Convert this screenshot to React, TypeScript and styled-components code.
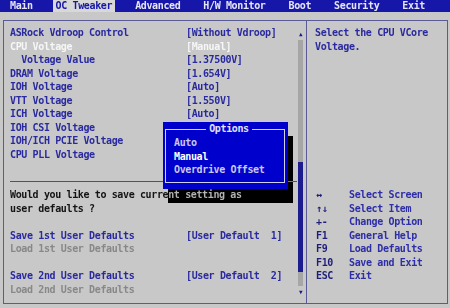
import React from 'react';
import styled, { createGlobalStyle } from 'styled-components';

const GlobalStyle = createGlobalStyle`
  html, body {
    margin: 0;
    padding: 0;
    background: #c8c8c8;
  }
`;

const ROW = 13.5;

const Screen = styled.div`
  width: 450px;
  height: 308px;
  overflow: hidden;
  background: #c8c8c8;
  font-family: 'DejaVu Sans Mono', 'Liberation Mono', monospace;
  font-size: 10px;
  letter-spacing: -0.37px;
  font-weight: bold;
  white-space: pre;
`;

const TabBar = styled.div`
  height: 12px;
  display: flex;
  gap: 17px;
  padding-left: 7px;
  background: #1616a8;
`;

const Tab = styled.div<{ $active?: boolean }>`
  padding: 0 3px;
  line-height: 12px;
  color: ${(p) => (p.$active ? '#1616a8' : '#e6e6f2')};
  background: ${(p) => (p.$active ? '#d8d8d8' : 'transparent')};
`;

const Frame = styled.div`
  margin: 8px 2px 0 3px;
  height: 284px;
  box-sizing: border-box;
  border: 1px solid #5a5a96;
  display: grid;
  grid-template-columns: 302px 1fr;
`;

const LeftPanel = styled.div`
  position: relative;
  display: flex;
  background: #c8c8c8;
`;

const List = styled.div`
  flex: 1;
  padding: 5.25px 0 0 6px;
`;

const Row = styled.div`
  display: grid;
  grid-template-columns: 176px 1fr;
  height: ${ROW}px;
  line-height: ${ROW}px;
`;

const tones = {
  blue: '#2a2aa0',
  white: '#f6f6f6',
  black: '#141414',
  gray: '#888888',
};

type Tone = keyof typeof tones;

const Cell = styled.span<{ $tone: Tone; $indent?: number }>`
  color: ${(p) => tones[p.$tone]};
  padding-left: ${(p) => (p.$indent || 0) * 5.65}px;
`;

const Separator = styled.div`
  height: ${ROW}px;
  position: relative;
  &::after {
    content: '';
    position: absolute;
    left: 0;
    right: 0;
    top: 6px;
    border-top: 1px solid #4646c4;
  }
`;

const ScrollCol = styled.div`
  width: 5px;
  padding: 7px 3px 5px 1px;
  display: flex;
  flex-direction: column;
`;

const Arrow = styled.div`
  height: 12px;
  line-height: 12px;
  font-size: 6px;
  text-align: center;
  color: #1c1c80;
`;

const Track = styled.div`
  flex: 1;
  background: #a6a6a6;
  display: flex;
  flex-direction: column;
`;

const Thumb = styled.div<{ $offset: number; $size: number }>`
  margin-top: ${(p) => p.$offset}px;
  height: ${(p) => p.$size}px;
  background: #1c1c8e;
`;

const Popup = styled.div`
  position: absolute;
  left: 159px;
  top: 101px;
  width: 125px;
  height: 67px;
  box-sizing: border-box;
  padding: 2px 3px 6px 2px;
  background: #0000cc;
  z-index: 2;
`;

const PopupShadow = styled.div`
  position: absolute;
  left: 164px;
  top: 114.5px;
  width: 125px;
  height: 67px;
  background: #c8c8c8;
  mix-blend-mode: difference;
  z-index: 1;
`;

const OptionBox = styled.fieldset`
  margin: 0;
  height: 100%;
  box-sizing: border-box;
  padding: 2px 0 0 8px;
  border: 1px solid #d0d0f0;
  min-inline-size: 0;
`;

const OptionTitle = styled.legend`
  margin: 0 auto;
  padding: 0 3px;
  line-height: 10px;
  color: #e0e0ff;
`;

const OptionItem = styled.div<{ $selected?: boolean }>`
  height: 13.6px;
  line-height: 13.6px;
  color: ${(p) => (p.$selected ? '#ffffff' : '#c8c8ee')};
`;

const RightPanel = styled.div`
  border-left: 1px solid #5a5a96;
  padding: 5.25px 0 0 8px;
`;

const HelpLine = styled.div`
  height: ${ROW}px;
  line-height: ${ROW}px;
  color: #2a2aa0;
`;

const KeyList = styled.div`
  margin-top: ${ROW * 10}px;
`;

const KeyRow = styled.div`
  display: grid;
  grid-template-columns: 33px 1fr;
  height: ${ROW}px;
  line-height: ${ROW}px;
  padding-left: 1px;
`;

const KeyName = styled.span`
  color: #1e1e78;
`;

const KeyText = styled.span`
  color: #2e2ea6;
`;

type Item =
  | { kind: 'row'; label: string; value?: string; tone: Tone; indent?: number }
  | { kind: 'blank' }
  | { kind: 'line' };

const items: Item[] = [
  { kind: 'row', label: 'ASRock Vdroop Control', value: '[Without Vdroop]', tone: 'blue' },
  { kind: 'row', label: 'CPU Voltage', value: '[Manual]', tone: 'white' },
  { kind: 'row', label: 'Voltage Value', value: '[1.37500V]', tone: 'blue', indent: 2 },
  { kind: 'row', label: 'DRAM Voltage', value: '[1.654V]', tone: 'blue' },
  { kind: 'row', label: 'IOH Voltage', value: '[Auto]', tone: 'blue' },
  { kind: 'row', label: 'VTT Voltage', value: '[1.550V]', tone: 'blue' },
  { kind: 'row', label: 'ICH Voltage', value: '[Auto]', tone: 'blue' },
  { kind: 'row', label: 'IOH CSI Voltage', tone: 'blue' },
  { kind: 'row', label: 'IOH/ICH PCIE Voltage', tone: 'blue' },
  { kind: 'row', label: 'CPU PLL Voltage', tone: 'blue' },
  { kind: 'blank' },
  { kind: 'line' },
  { kind: 'row', label: 'Would you like to save current setting as', tone: 'black' },
  { kind: 'row', label: 'user defaults ?', tone: 'black' },
  { kind: 'blank' },
  { kind: 'row', label: 'Save 1st User Defaults', value: '[User Default  1]', tone: 'blue' },
  { kind: 'row', label: 'Load 1st User Defaults', tone: 'gray' },
  { kind: 'blank' },
  { kind: 'row', label: 'Save 2nd User Defaults', value: '[User Default  2]', tone: 'blue' },
  { kind: 'row', label: 'Load 2nd User Defaults', tone: 'gray' },
];

const tabs = ['Main', 'OC Tweaker', 'Advanced', 'H/W Monitor', 'Boot', 'Security', 'Exit'];

const keys = [
  ['\u2194', 'Select Screen'],
  ['\u2191\u2193', 'Select Item'],
  ['+-', 'Change Option'],
  ['F1', 'General Help'],
  ['F9', 'Load Defaults'],
  ['F10', 'Save and Exit'],
  ['ESC', 'Exit'],
];

const App: React.FC = () => {
  return (
    <Screen>
      <GlobalStyle />
      <TabBar>
        {tabs.map((t) => (
          <Tab key={t} $active={t === 'OC Tweaker'}>
            {t}
          </Tab>
        ))}
      </TabBar>
      <Frame>
        <LeftPanel>
          <List>
            {items.map((it, i) => {
              if (it.kind === 'blank') return <Row key={i} />;
              if (it.kind === 'line') return <Separator key={i} />;
              return (
                <Row key={i}>
                  <Cell $tone={it.tone} $indent={it.indent}>
                    {it.label}
                  </Cell>
                  {it.value && <Cell $tone={it.tone}>{it.value}</Cell>}
                </Row>
              );
            })}
          </List>
          <ScrollCol>
            <Arrow>▲</Arrow>
            <Track>
              <Thumb $offset={122} $size={110} />
            </Track>
            <Arrow>▼</Arrow>
          </ScrollCol>
          <PopupShadow />
          <Popup>
            <OptionBox>
              <OptionTitle>Options</OptionTitle>
              <OptionItem>Auto</OptionItem>
              <OptionItem $selected>Manual</OptionItem>
              <OptionItem>Overdrive Offset</OptionItem>
            </OptionBox>
          </Popup>
        </LeftPanel>
        <RightPanel>
          <HelpLine>Select the CPU VCore</HelpLine>
          <HelpLine>Voltage.</HelpLine>
          <KeyList>
            {keys.map(([k, d]) => (
              <KeyRow key={k}>
                <KeyName>{k}</KeyName>
                <KeyText>{d}</KeyText>
              </KeyRow>
            ))}
          </KeyList>
        </RightPanel>
      </Frame>
    </Screen>
  );
};

export default App;
